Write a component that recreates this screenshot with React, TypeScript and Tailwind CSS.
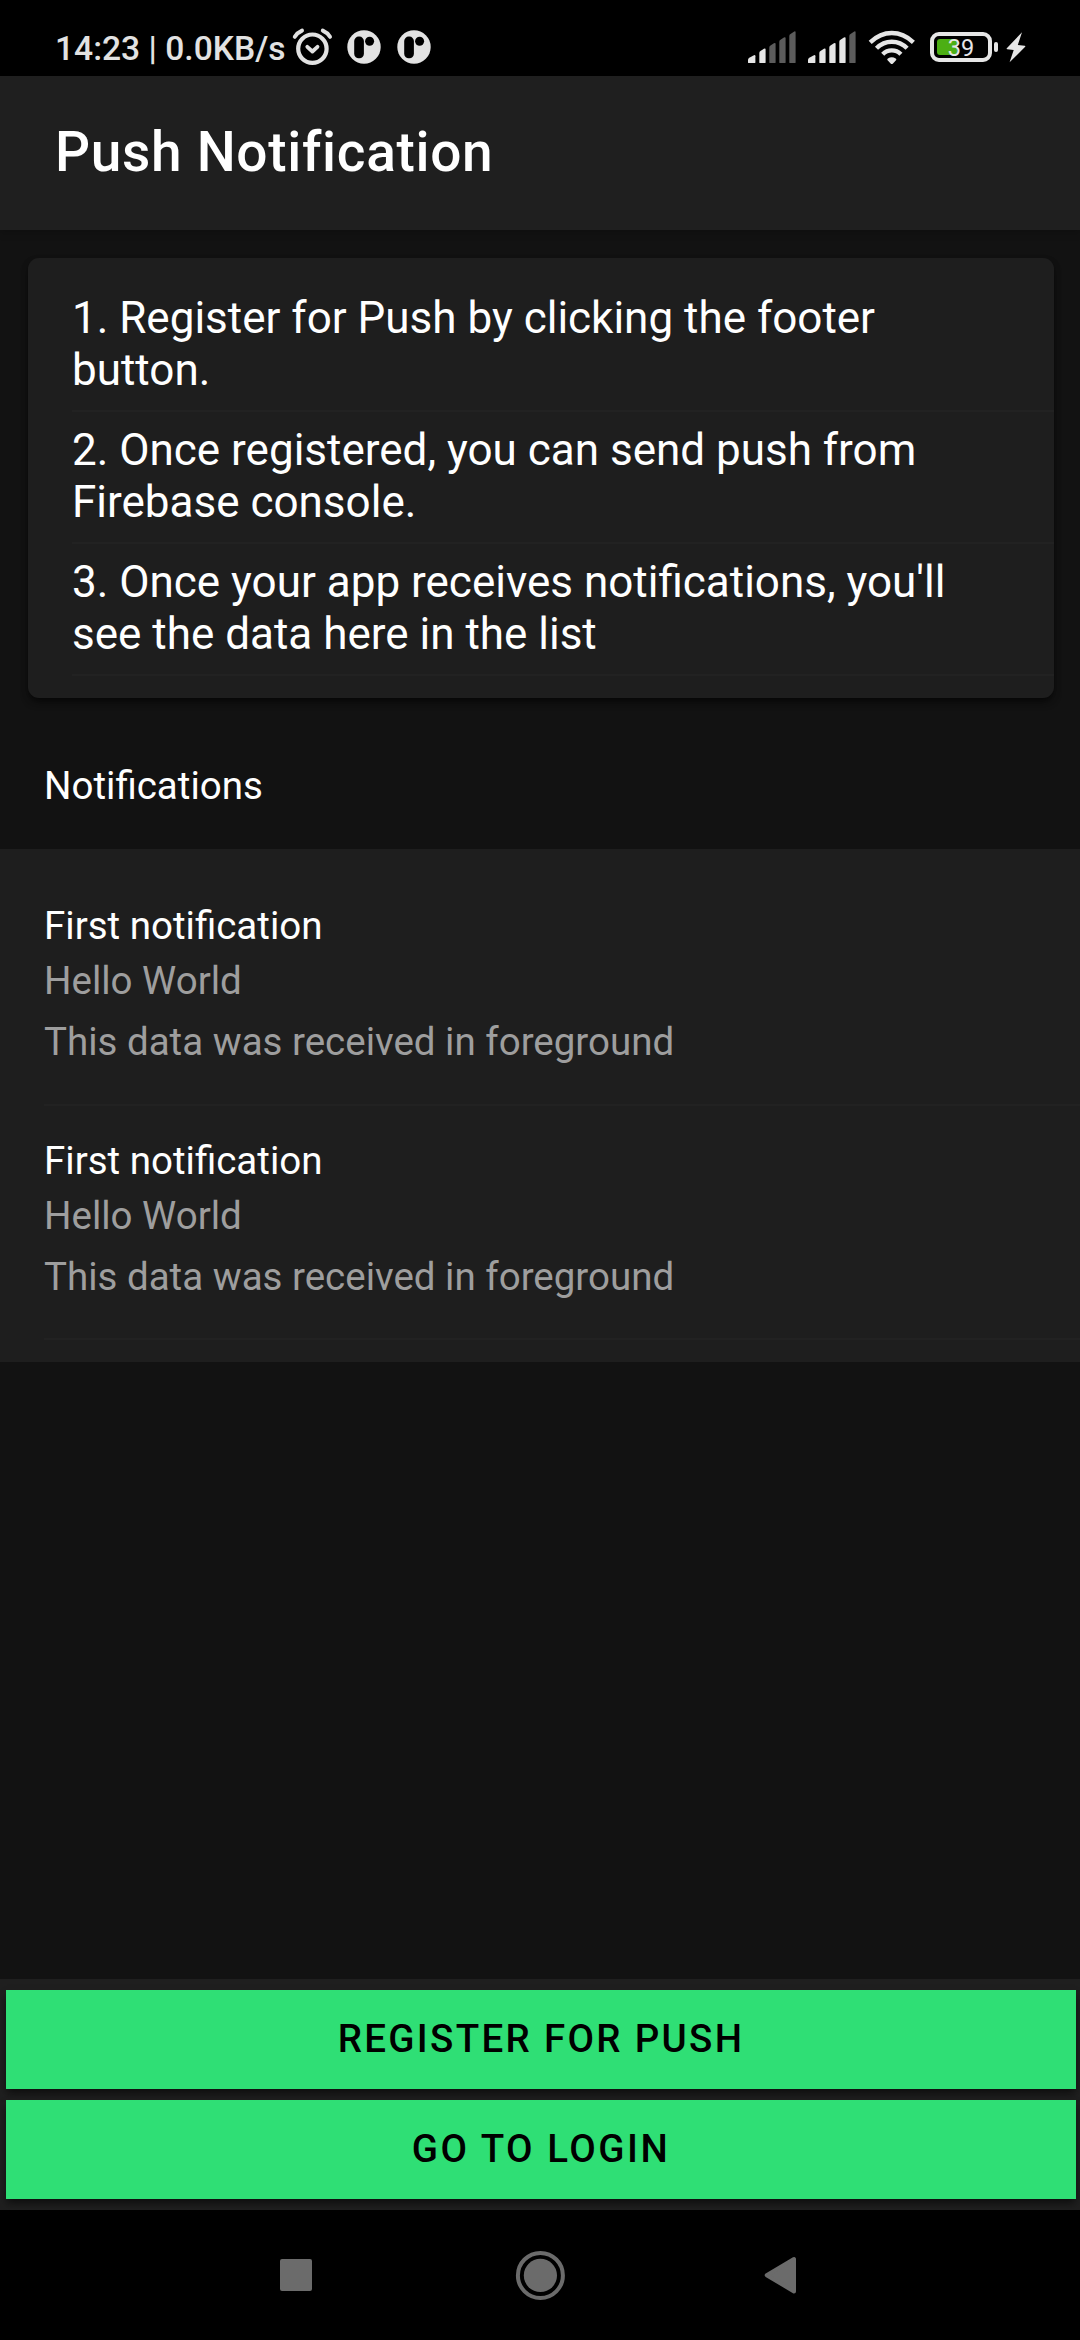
const steps = [
  "1. Register for Push by clicking the footer button.",
  "2. Once registered, you can send push from Firebase console.",
  "3. Once your app receives notifications, you'll see the data here in the list",
];

const notifications = [
  { id: 1, title: "First notification", body: "Hello World", note: "This data was received in foreground" },
  { id: 2, title: "First notification", body: "Hello World", note: "This data was received in foreground" },
];

function AlarmIcon() {
  return (
    <svg width="42" height="40" viewBox="291 27 42 40" fill="none" stroke="#e2e2e2" strokeLinecap="round" strokeLinejoin="round">
      <circle cx="312.4" cy="48.7" r="14.2" strokeWidth="4.2" />
      <path d="M307.3 46.8l5.100 4.700 5.100-4.700" strokeWidth="3.8" />
      <path d="M294.8 36.8Q297.5 32.5 302 30.6M330 36.8Q327.3 32.5 322.8 30.6" strokeWidth="4" />
    </svg>
  );
}

function AppIcon() {
  return (
    <svg width="34" height="34" viewBox="0 0 34 34">
      <circle cx="17" cy="17" r="16.7" fill="#e2e2e2" />
      <rect x="7.2" y="6.6" width="9.7" height="21.7" rx="4.5" fill="#000" />
      <circle cx="22.6" cy="11.3" r="4.5" fill="#000" />
    </svg>
  );
}

function SignalIcon({ level }: { level: number }) {
  const bars = [
    "M0 29q0-1.500 1.300-2.300l4.200-2.300q1.900-.9 1.900.8v6q0 1-1 1h-5.400q-1 0-1-1z",
    "M11.300 22q0-1.200 1.200-1.900l3.400-2.300q1.700-1 1.700.7v12.700q0 1-1 1h-4.300q-1 0-1-1z",
    "M21.300 16.500q0-1.200 1.200-1.900l3.400-2.300q1.700-1 1.700.7v18.200q0 1-1 1h-4.300q-1 0-1-1z",
    "M31.300 10.700q0-1.200 1.200-1.900l3.400-2.300q1.700-1 1.700.7v24q0 1-1 1h-4.300q-1 0-1-1z",
    "M41.300 4.900q0-1.200 1.200-1.900l3.400-2.300q1.700-1 1.700.7v29.800q0 1-1 1h-4.300q-1 0-1-1z",
  ];
  return (
    <svg width="48" height="32" viewBox="0 0 48 32">
      {bars.map((d, i) => (
        <path key={i} d={d} fill={i < level ? "#e6e6e6" : "#5c5c5c"} />
      ))}
    </svg>
  );
}

function WifiIcon() {
  return (
    <svg width="48" height="34" viewBox="868 30 48 34" fill="none" stroke="#e6e6e6" strokeWidth="4.400">
      <path d="M870.200 42.300Q880 33 891.800 33T913.400 42.300" />
      <path d="M876.500 48.300Q883 41.700 891.800 41.700T907.100 48.300" />
      <path d="M882.700 54.200Q886.500 50.400 891.800 50.400T900.900 54.200" />
      <path d="M887.600 60.300q-.8-1 .3-1.700 3.900-2.600 7.800 0 1.100.7.300 1.700l-3 3.200q-1.200 1-2.400 0z" fill="#e6e6e6" stroke="none" />
    </svg>
  );
}

function Battery() {
  return (
    <div className="flex items-center">
      <div className="relative flex h-[30px] w-[62px] items-center rounded-[9px] border-4 border-[#e6e6e6] pl-[3px]">
        <div className="h-4 w-5 rounded-[3px] bg-[#4caf14]" />
        <span className="absolute inset-0 flex items-center justify-center pt-[3px] text-[23.500px] leading-none text-[#e6e6e6]">39</span>
      </div>
      <div className="ml-[2px] h-[10px] w-1 rounded-[2px] bg-[#e6e6e6]" />
    </div>
  );
}

function StatusBar() {
  return (
    <header className="flex h-[76px] shrink-0 items-start bg-black pl-[55px] pr-[54px] text-[#e2e2e2]">
      <span className="mt-[29px] w-[236px] whitespace-nowrap text-[33.600px] font-medium leading-[40px]">14:23 | 0.0KB/s</span>
      <div className="mt-[27px]"><AlarmIcon /></div>
      <div className="ml-[14px] mt-[30px]"><AppIcon /></div>
      <div className="ml-4 mt-[30px]"><AppIcon /></div>
      <div className="ml-auto mt-[31px]"><SignalIcon level={2} /></div>
      <div className="ml-3 mt-[31px]"><SignalIcon level={4} /></div>
      <div className="ml-3 mt-[30px]"><WifiIcon /></div>
      <div className="ml-[14px] mt-8"><Battery /></div>
      <svg className="ml-[7px] mt-8" width="21" height="31" viewBox="0 0 21 31" fill="#e6e6e6">
        <path d="M17 .3L1.800 16.200q-.6.900.4 1.100l6.500.7L4.600 30.300 20.200 14.700q.5-.9-.5-1L12.800 13z" />
      </svg>
    </header>
  );
}

export default function App() {
  return (
    <div className="flex h-[2340px] w-[1080px] flex-col overflow-hidden bg-[#121212] font-['Roboto',sans-serif]">
      <StatusBar />
      <div className="z-10 flex h-[154px] shrink-0 items-center bg-[#1f1f1f] pb-[2px] pl-[55px] shadow-[0_3px_8px_rgba(0,0,0,0.200)]">
        <h1 className="text-[55px] font-medium leading-none tracking-[0.0125em] text-white">Push Notification</h1>
      </div>

      <main className="flex min-h-0 flex-1 flex-col">
        <section className="mx-7 mt-7 h-[440px] w-[1026px] shrink-0 rounded-[11px] bg-[#1e1e1e] pt-[22px] shadow-[0_5px_8px_-2px_rgba(0,0,0,0.500),0_3px_6px_rgba(0,0,0,0.300)]">
          <ul className="pl-11">
            {steps.map((step) => (
              <li key={step} className="h-[132px] border-b-2 border-[#222222] pt-[12px] text-[44px] leading-[52px] text-white">
                <p className="w-[920px]">{step}</p>
              </li>
            ))}
          </ul>
        </section>

        <h2 className="mt-[63px] pl-11 text-[38.500px] leading-[50px] text-white">Notifications</h2>

        <ul className="mt-[38px] h-[513px] shrink-0 bg-[#1e1e1e] pl-11 pt-[22px]">
          {notifications.map((n) => (
            <li key={n.id} className="h-[235px] border-b-2 border-[#222222] pt-[30px] text-[38.500px] leading-[50px] text-[#9e9e9e] last:h-[234px]">
              <h3 className="text-white">{n.title}</h3>
              <p className="mt-[5px]">{n.body}</p>
              <p className="mt-[11px]">{n.note}</p>
            </li>
          ))}
        </ul>
      </main>

      <footer className="flex h-[231px] shrink-0 flex-col gap-[11px] bg-[#1f1f1f] pl-[6px] pr-1 pt-[11px] text-[38.500px] font-medium text-black">
        <button className="h-[99px] bg-[#2fdf75] pb-[2px] uppercase tracking-[2.310px] shadow-[0_5px_8px_-1px_rgba(0,0,0,0.600)]">Register for push</button>
        <button className="h-[99px] bg-[#2fdf75] pb-[2px] uppercase tracking-[2.500px] shadow-[0_5px_8px_-1px_rgba(0,0,0,0.600)]">Go to login</button>
      </footer>

      <nav className="z-10 flex h-[130px] shrink-0 items-center bg-black pl-[280px]">
        <div className="size-8 rounded-[2px] bg-[#6b6b6b]" />
        <svg className="ml-[203px]" width="50" height="50" viewBox="0 0 50 50" fill="#6b6b6b">
          <circle cx="25.400" cy="25.400" r="22.500" fill="none" stroke="#6b6b6b" strokeWidth="4" />
          <circle cx="25.400" cy="25.400" r="16.600" />
        </svg>
        <svg className="ml-[199px]" width="32" height="38" viewBox="0 0 32 38" fill="#6b6b6b" stroke="#6b6b6b" strokeWidth="4" strokeLinejoin="round">
          <path d="M30 3V35.500L2.700 19.200z" />
        </svg>
      </nav>
    </div>
  );
}
